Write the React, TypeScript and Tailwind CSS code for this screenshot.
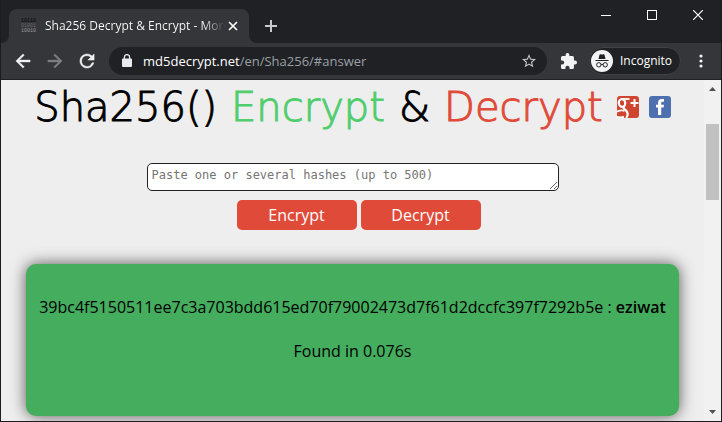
import type { ReactNode } from "react";

function TitleBar() {
  return (
    <header className="flex h-[43px] shrink-0 bg-[#202124]">
      <div className="flex min-w-0 flex-1 items-end">
        <div className="flex h-[34px] w-[8px] shrink-0 items-end bg-[#35363a]">
          <div className="size-full rounded-br-lg bg-[#202124]" />
        </div>
        <div className="flex h-[34px] w-[240px] shrink-0 items-center rounded-t-lg bg-[#35363a] pr-2 pl-3">
          <Favicon />
          <span className="ml-2 w-[184px] bg-linear-to-r from-white from-86% to-[#35363a] to-98% bg-clip-text text-xs whitespace-nowrap text-transparent">
            Sha256 Decrypt &amp; Encrypt - More
          </span>
          <button type="button" aria-label="Close tab" className="-ml-1 flex size-4 shrink-0 items-center justify-center text-white">
            <svg viewBox="0 0 16 16" className="size-4" fill="none" stroke="currentColor" strokeWidth="1.7">
              <path d="M4 4l8 8M12 4l-8 8" />
            </svg>
          </button>
        </div>
        <div className="h-[34px] w-2 shrink-0 bg-[#35363a]">
          <div className="size-full rounded-bl-lg bg-[#202124]" />
        </div>
        <button type="button" aria-label="New tab" className="mb-[7px] ml-1 flex size-5 items-center justify-center text-[#c9cacc]">
          <svg viewBox="0 0 20 20" className="size-5" fill="none" stroke="currentColor" strokeWidth="2">
            <path d="M10 4v12M4 10h12" />
          </svg>
        </button>
      </div>
      <div className="flex h-[30px] items-stretch text-white">
        <button type="button" aria-label="Minimize" className="flex w-[46px] items-center justify-center">
          <svg viewBox="0 0 10 10" className="size-[10px]" stroke="currentColor" shapeRendering="crispEdges">
            <path d="M0 5.5h10" />
          </svg>
        </button>
        <button type="button" aria-label="Maximize" className="flex w-[46px] items-center justify-center">
          <svg viewBox="0 0 10 10" className="size-[10px]" fill="none" stroke="currentColor" shapeRendering="crispEdges">
            <path d="M.5 .5h9v9h-9z" />
          </svg>
        </button>
        <button type="button" aria-label="Close" className="flex w-[46px] items-center justify-center">
          <svg viewBox="0 0 10 10" className="size-[10px]" fill="none" stroke="currentColor" strokeWidth="1.2">
            <path d="M0 0l10 10M10 0L0 10" />
          </svg>
        </button>
      </div>
    </header>
  );
}

function Favicon() {
  return (
    <span className="flex size-4 shrink-0 flex-col justify-center font-['Liberation_Mono',monospace] text-[5px] leading-[5px]">
      <span className="text-[#050506]">10110</span>
      <span className="text-[#6b6c70]">01001</span>
      <span className="text-[#97989c]">10010</span>
    </span>
  );
}

function NavButton({ label, className, children }: { label: string; className: string; children: ReactNode }) {
  return (
    <button type="button" aria-label={label} className={`flex size-4 shrink-0 items-center justify-center ${className}`}>
      <svg viewBox="3 3 18 18" className="size-4" fill="currentColor" stroke="currentColor" strokeWidth="0.5">
        {children}
      </svg>
    </button>
  );
}

function Toolbar() {
  return (
    <nav className="flex h-[37px] shrink-0 items-center border-b border-[#1f2023] bg-[#35363a] pr-3 pl-[14px]">
      <NavButton label="Back" className="text-[#f1f1f2]">
        <path d="M20 11H7.83l5.59-5.59L12 4l-8 8 8 8 1.41-1.41L7.83 13H20z" />
      </NavButton>
      <NavButton label="Forward" className="ml-4 text-[#7e7f83]">
        <path d="M12 4l-1.41 1.41L16.17 11H4v2h12.17l-5.58 5.59L12 20l8-8z" />
      </NavButton>
      <NavButton label="Reload" className="ml-4 text-[#f1f1f2]">
        <path d="M17.65 6.35A7.96 7.96 0 0 0 12 4a8 8 0 1 0 7.73 10h-2.08A6 6 0 1 1 12 6c1.66 0 3.14.69 4.22 1.78L13 11h7V4z" />
      </NavButton>
      <div className="ml-[14px] flex h-7 min-w-0 flex-1 items-center rounded-full bg-[#202124] pr-[10px] pl-[13px]">
        <svg viewBox="0 0 10 13" className="mb-px h-[13px] w-[10px] shrink-0 text-[#e8eaed]" fill="currentColor">
          <path d="M1 4.5h8a1 1 0 0 1 1 1V12a1 1 0 0 1-1 1H1a1 1 0 0 1-1-1V5.500a1 1 0 0 1 1-1z" />
          <path d="M2.400 5V3a2.600 2.400 0 0 1 5.200 0v2" fill="none" stroke="currentColor" strokeWidth="1.300" />
        </svg>
        <a href="#answer" className="ml-[11px] min-w-0 flex-1 truncate text-[13px] leading-5 text-[#9aa0a6]">
          <span className="text-white">md5decrypt.net</span>/en/Sha256/#answer
        </a>
        <button type="button" aria-label="Bookmark this page" className="flex size-4 items-center justify-center text-[#c5c6c9]">
          <svg viewBox="2 2 20 20" className="size-[14px]" fill="currentColor">
            <path d="M22 9.240l-7.190-.62L12 2 9.190 8.630 2 9.240l5.460 4.730L5.820 21 12 17.270 18.180 21l-1.630-7.030L22 9.240zM12 15.400l-3.760 2.270 1-4.280-3.320-2.880 4.380-.38L12 6.100l1.710 4.040 4.380.38-3.320 2.880 1 4.280L12 15.400z" />
          </svg>
        </button>
      </div>
      <button type="button" aria-label="Extensions" className="ml-[14px] text-[#f1f3f4]">
        <svg viewBox="2 1 21 21" className="size-4" fill="currentColor">
          <path d="M20.500 11H19V7a2 2 0 0 0-2-2h-4V3.500a2.500 2.500 0 0 0-5 0V5H4a2 2 0 0 0-1.990 2v3.800H3.500a2.700 2.700 0 0 1 0 5.400H2V20a2 2 0 0 0 2 2h3.800v-1.500a2.700 2.700 0 0 1 5.400 0V22H17a2 2 0 0 0 2-2v-4h1.500a2.500 2.500 0 0 0 0-5z" />
        </svg>
      </button>
      <button type="button" className="ml-3 flex h-7 w-[92px] items-center rounded-full border border-[#404145] bg-[#202124] text-xs text-white">
        <svg viewBox="0 0 22 22" className="ml-px size-[22px] shrink-0">
          <circle cx="11" cy="11" r="11" fill="#f1f3f4" />
          <path d="M4.500 10h13v1h-13zM7.500 9l1-4.200c.2-.6.700-.8 1.200-.5.800.4 1.800.4 2.600 0 .5-.3 1-.1 1.200.5l1 4.200z" fill="#202124" />
          <g fill="none" stroke="#202124" strokeWidth="1">
            <circle cx="7.800" cy="14.800" r="2.200" />
            <circle cx="14.200" cy="14.800" r="2.200" />
            <path d="M10 14.600q1-.7 2 0" />
          </g>
        </svg>
        <span className="ml-[7px]">Incognito</span>
      </button>
      <button type="button" aria-label="Menu" className="ml-3 flex w-4 justify-center text-[#f1f3f4]">
        <svg viewBox="0 0 4 14" className="h-[14px] w-1" fill="currentColor">
          <circle cx="2" cy="2" r="1.600" />
          <circle cx="2" cy="7" r="1.600" />
          <circle cx="2" cy="12" r="1.600" />
        </svg>
      </button>
    </nav>
  );
}

function Heading() {
  return (
    <div className="flex h-[54px] items-center justify-center gap-[14px]">
      <h1 className="flex items-center gap-[14px] font-['DejaVu_Sans',sans-serif] text-[40px] leading-[50px] font-extralight whitespace-nowrap [-webkit-text-stroke:1px]">
        <span className="text-black">Sha256()</span>
        <span className="text-[#50cd6c]">Encrypt</span>
        <span className="text-black">&amp;</span>
        <span className="text-[#e04a38]">Decrypt</span>
      </h1>
      <div className="flex gap-[10px]">
        <a href="#google" aria-label="Share on Google+">
          <svg viewBox="0 0 22 22" className="size-[22px]">
            <rect width="22" height="22" rx="3" fill="#d0452f" />
            <g fill="none" stroke="#fff">
              <ellipse cx="5" cy="7" rx="3.200" ry="3.800" strokeWidth="2.200" transform="rotate(-12 5 7)" />
              <path d="M5 3h7.500" strokeWidth="1.800" />
              <path d="M7.500 10.500c-1.800 1.500-.6 2.300 1 3.500 3 2.200 2.600 5.500.6 8" strokeWidth="2.200" />
              <path d="M0 15.800c2.500-1.500 5-1.600 7.500-1M0 20.800c2 .7 4 .7 7 0" strokeWidth="1.700" />
              <path d="M17.500 3v8M13.500 7h8" strokeWidth="2" />
            </g>
          </svg>
        </a>
        <a href="#facebook" aria-label="Share on Facebook">
          <svg viewBox="0 0 22 22" className="size-[22px]">
            <rect width="22" height="22" rx="3" fill="#4f70ae" />
            <path d="M9 19v-7.500H7V8.700h2V6.900C9 4.300 10.400 3 12.800 3H15v2.800h-1.500c-1 0-1.300.4-1.300 1.300v1.600H15l-.4 2.800h-2.400V19z" fill="#fff" />
          </svg>
        </a>
      </div>
    </div>
  );
}

function Scrollbar() {
  return (
    <div aria-hidden="true" className="flex w-[17px] shrink-0 flex-col items-center bg-[#f1f1f1]">
      <svg viewBox="0 0 17 17" className="size-[17px]" fill="#505050">
        <path d="M5 11l3.500-4 3.500 4z" />
      </svg>
      <div className="mt-[27px] h-[76px] w-[13px] bg-[#c1c1c1]" />
      <svg viewBox="0 0 17 17" className="mt-auto size-[17px]" fill="#505050">
        <path d="M5 6l3.500 4L12 6z" />
      </svg>
    </div>
  );
}

export default function App() {
  return (
    <div className="flex h-screen w-full flex-col overflow-hidden border-x border-b border-[#1b1c1f] bg-[#eee] font-['Open_Sans',sans-serif]">
      <TitleBar />
      <Toolbar />
      <div className="flex min-h-0 flex-1">
        <main className="min-w-0 flex-1 overflow-hidden px-[25px]">
          <Heading />
          <form className="mt-[29px] flex flex-col items-center" onSubmit={(event) => event.preventDefault()}>
            <textarea
              aria-label="Hashes"
              rows={1}
              placeholder="Paste one or several hashes (up to 500)"
              className="h-7 w-[412px] max-w-full overflow-hidden rounded-[5px] border border-[#222] bg-white px-1 py-[2px] font-['DejaVu_Sans_Mono',monospace] text-xs leading-[18px] placeholder:text-[#757575]"
            />
            <div className="mt-[9px] flex gap-1 pl-3 text-base text-white">
              <button type="submit" className="h-[30px] w-[120px] rounded-[5px] bg-[#e04a38]">
                Encrypt
              </button>
              <button type="submit" className="h-[30px] w-[120px] rounded-[5px] bg-[#e04a38]">
                Decrypt
              </button>
            </div>
          </form>
          <section id="answer" className="mt-[34px] flex h-[152px] flex-col items-center gap-5 rounded-[10px] bg-[#44ad5e] pt-[31px] text-base leading-6 text-black shadow-[0_0_15px_#555]">
            <p className="whitespace-nowrap">
              39bc4f5150511ee7c3a703bdd615ed70f79002473d7f61d2dccfc397f7292b5e : <b className="font-semibold">eziwat</b>
            </p>
            <p>Found in 0.076s</p>
          </section>
        </main>
        <Scrollbar />
      </div>
    </div>
  );
}
